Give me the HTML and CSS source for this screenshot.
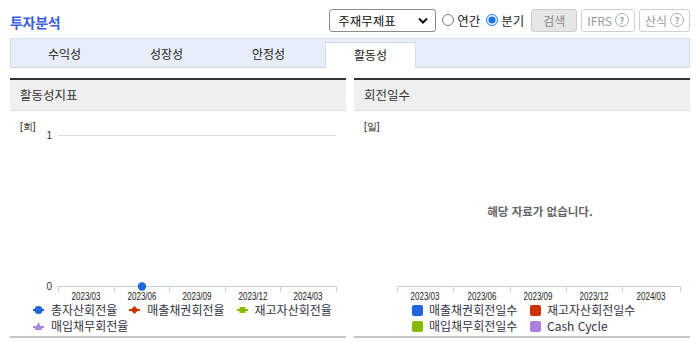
FILE: index.html
```html
<!DOCTYPE html>
<html lang="ko">
<head>
    <meta charset="UTF-8">
    <title>투자분석</title>
    <link rel="stylesheet" href="styles.css">
</head>
<body>
    <div class="wrap">
        <div class="top">
            <h2 class="title">투자분석</h2>
            <div class="controls">
                <div class="select-box">
                    <span>주재무제표</span>
                    <svg width="10" height="7" viewBox="0 0 10 7"><path d="M1 1.5 L5 5.5 L9 1.5" fill="none" stroke="#111" stroke-width="2"/></svg>
                </div>
                <label class="radio"><input type="radio" name="term"> 연간</label>
                <label class="radio"><input type="radio" name="term" checked> 분기</label>
                <button class="btn btn-search">검색</button>
                <button class="btn">IFRS <span class="help">?</span></button>
                <button class="btn">산식 <span class="help">?</span></button>
            </div>
        </div>

        <div class="tabs">
            <div class="tab">수익성</div>
            <div class="tab">성장성</div>
            <div class="tab">안정성</div>
            <div class="tab active">활동성</div>
        </div>

        <div class="panels">
            <div class="panel">
                <div class="panel-head">활동성지표</div>
                <div class="panel-body">
                    <svg class="chart" width="336" height="191">
                        <text x="10" y="19" class="unit">[회]</text>
                        <line x1="48" y1="24.5" x2="326" y2="24.5" stroke="#dcdcdc"/>
                        <text x="42" y="28" class="tick-num" text-anchor="end">1</text>
                        <text x="42" y="179" class="tick-num" text-anchor="end">0</text>
                        <g stroke="#c3d2e2">
                            <line x1="48" y1="175.5" x2="327" y2="175.5"/>
                            <line x1="48.5" y1="175" x2="48.5" y2="181"/>
                            <line x1="104.5" y1="175" x2="104.5" y2="181"/>
                            <line x1="159.5" y1="175" x2="159.5" y2="181"/>
                            <line x1="215.5" y1="175" x2="215.5" y2="181"/>
                            <line x1="270.5" y1="175" x2="270.5" y2="181"/>
                            <line x1="326.5" y1="175" x2="326.5" y2="181"/>
                        </g>
                        <g class="cat" text-anchor="middle">
                            <text x="76" y="189" textLength="29" lengthAdjust="spacingAndGlyphs">2023/03</text>
                            <text x="132" y="189" textLength="29" lengthAdjust="spacingAndGlyphs">2023/06</text>
                            <text x="187" y="189" textLength="29" lengthAdjust="spacingAndGlyphs">2023/09</text>
                            <text x="243" y="189" textLength="29" lengthAdjust="spacingAndGlyphs">2023/12</text>
                            <text x="298" y="189" textLength="29" lengthAdjust="spacingAndGlyphs">2024/03</text>
                        </g>
                        <circle cx="132" cy="175.5" r="4.2" fill="#1f66dd"/>
                    </svg>
                    <div class="legend">
                        <span class="item"><svg width="11" height="10"><line x1="0" y1="5" x2="11" y2="5" stroke="#1f66dd" stroke-width="2"/><circle cx="5.5" cy="5" r="4" fill="#1f66dd"/></svg>총자산회전율</span>
                        <span class="item"><svg width="11" height="10"><line x1="0" y1="5" x2="11" y2="5" stroke="#cc3300" stroke-width="2"/><path d="M5.5 1 L9.5 5 L5.5 9 L1.5 5 Z" fill="#cc3300"/></svg>매출채권회전율</span>
                        <span class="item"><svg width="11" height="10"><line x1="0" y1="5" x2="11" y2="5" stroke="#88bb00" stroke-width="2"/><rect x="2.5" y="2" width="6" height="6" fill="#88bb00"/></svg>재고자산회전율</span>
                        <span class="item"><svg width="11" height="10"><line x1="0" y1="6" x2="11" y2="6" stroke="#aa88dd" stroke-width="2"/><path d="M5.5 1 L9.5 9 L1.5 9 Z" fill="#aa88dd"/></svg>매입채무회전율</span>
                    </div>
                </div>
            </div>

            <div class="panel">
                <div class="panel-head">회전일수</div>
                <div class="panel-body">
                    <svg class="chart" width="336" height="191">
                        <text x="10" y="19" class="unit">[일]</text>
                        <text x="186" y="105" class="empty" text-anchor="middle">해당 자료가 없습니다.</text>
                        <g stroke="#c3d2e2">
                            <line x1="43" y1="175.5" x2="327" y2="175.5"/>
                            <line x1="43.5" y1="175" x2="43.5" y2="181"/>
                            <line x1="99.5" y1="175" x2="99.5" y2="181"/>
                            <line x1="156.5" y1="175" x2="156.5" y2="181"/>
                            <line x1="212.5" y1="175" x2="212.5" y2="181"/>
                            <line x1="268.5" y1="175" x2="268.5" y2="181"/>
                            <line x1="326.5" y1="175" x2="326.5" y2="181"/>
                        </g>
                        <g class="cat" text-anchor="middle">
                            <text x="71" y="189" textLength="29" lengthAdjust="spacingAndGlyphs">2023/03</text>
                            <text x="128" y="189" textLength="29" lengthAdjust="spacingAndGlyphs">2023/06</text>
                            <text x="184" y="189" textLength="29" lengthAdjust="spacingAndGlyphs">2023/09</text>
                            <text x="240" y="189" textLength="29" lengthAdjust="spacingAndGlyphs">2023/12</text>
                            <text x="297" y="189" textLength="29" lengthAdjust="spacingAndGlyphs">2024/03</text>
                        </g>
                    </svg>
                    <div class="legend legend-grid">
                        <span class="item"><i class="sq" style="background:#1f66dd"></i>매출채권회전일수</span>
                        <span class="item"><i class="sq" style="background:#cc3300"></i>재고자산회전일수</span>
                        <span class="item"><i class="sq" style="background:#88bb00"></i>매입채무회전일수</span>
                        <span class="item"><i class="sq" style="background:#aa7fdd"></i>Cash Cycle</span>
                    </div>
                </div>
            </div>
        </div>
    </div>
</body>
</html>
```

FILE: styles.css
```css
body {
    margin: 0;
    font-family: "Noto Sans CJK KR", "Noto Sans", sans-serif;
    color: #333;
    background: #fff;
}
.wrap {
    width: 680px;
    padding: 0 7px 0 10px;
}
.top {
    display: flex;
    justify-content: space-between;
    align-items: center;
    height: 38px;
    padding-top: 2px;
    box-sizing: border-box;
}
.title {
    margin: 0;
    font-size: 14px;
    font-weight: bold;
    color: #3b5ee0;
    letter-spacing: -0.3px;
    padding-top: 4px;
}
.controls {
    display: flex;
    align-items: center;
}
.select-box {
    display: flex;
    align-items: center;
    justify-content: space-between;
    width: 107px;
    height: 23px;
    box-sizing: border-box;
    border: 1px solid #8a8a8a;
    border-radius: 3px;
    padding: 0 7px 0 8px;
    font-size: 12.5px;
    color: #111;
}
.radio {
    display: flex;
    align-items: center;
    font-size: 12.5px;
    color: #222;
    margin-left: 6px;
}
.radio input {
    width: 12px;
    height: 12px;
    margin: 0 3px 0 0;
    accent-color: #1a73e8;
}
.btn {
    display: flex;
    align-items: center;
    height: 23px;
    margin-left: 4px;
    padding: 0 5px;
    border: 1px solid #cfcfcf;
    border-radius: 3px;
    background: #fff;
    color: #999;
    font-family: "Noto Sans CJK KR", "Noto Sans", sans-serif;
    font-size: 12px;
}
.btn-search {
    width: 46px;
    justify-content: center;
    background: #e6e6e6;
    border-color: #cccccc;
    color: #888;
    margin-left: 7px;
}
.help {
    display: inline-flex;
    align-items: center;
    justify-content: center;
    width: 12px;
    height: 12px;
    margin-left: 3px;
    border: 1px solid #aaa;
    border-radius: 50%;
    font-size: 9px;
    font-weight: bold;
    color: #999;
}
.tabs {
    display: flex;
    align-items: flex-end;
    gap: 11px;
    height: 30px;
    box-sizing: border-box;
    border: 1px solid #d3dbe8;
    background: #e8eef9;
    padding-left: 8px;
}
.tab {
    width: 91px;
    height: 25px;
    box-sizing: border-box;
    display: flex;
    align-items: center;
    justify-content: center;
    font-size: 12px;
    color: #222;
    padding-bottom: 2px;
}
.tab.active {
    background: #fff;
    border: 1px solid #d3dbe8;
    border-bottom: none;
    height: 26px;
    margin-bottom: -1px;
}
.panels {
    display: flex;
    gap: 8px;
    margin-top: 10px;
}
.panel {
    flex: 1;
    border-top: 2px solid #333;
    border-bottom: 2px solid #c6c6c6;
}
.panel-head {
    height: 30px;
    line-height: 30px;
    background: #efefef;
    border-bottom: 1px solid #dcdcdc;
    padding-left: 10px;
    font-size: 12.5px;
    color: #333;
}
.panel-body {
    height: 225px;
}
.chart {
    display: block;
}
.unit {
    font-family: "Liberation Sans", sans-serif;
    font-size: 10px;
    fill: #222;
}
.tick-num {
    font-family: "Liberation Sans", sans-serif;
    font-size: 10px;
    fill: #333;
}
.cat {
    font-family: "Liberation Sans", sans-serif;
    font-size: 10px;
    fill: #222;
}
.empty {
    font-family: "Noto Sans CJK KR", sans-serif;
    font-size: 11.5px;
    font-weight: bold;
    fill: #666;
}
.legend {
    display: flex;
    flex-wrap: wrap;
    column-gap: 12px;
    padding-left: 23px;
    font-size: 12px;
    line-height: 16px;
    color: #334;
}
.legend .item {
    display: flex;
    align-items: center;
    gap: 7px;
}
.legend-grid {
    display: grid;
    grid-template-columns: 118px auto;
    column-gap: 0;
    padding-left: 58px;
}
.legend-grid .item {
    gap: 6px;
}
.sq {
    display: inline-block;
    width: 11px;
    height: 11px;
    border-radius: 2px;
}
```
